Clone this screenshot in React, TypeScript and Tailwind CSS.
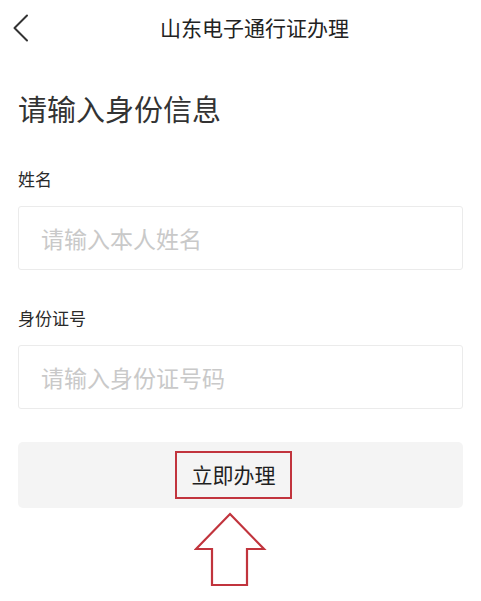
import React from "react";

const font = { fontFamily: '"Noto Sans CJK SC", "Noto Sans", sans-serif' };

function BackIcon() {
  return (
    <svg width="18" height="28" viewBox="0 0 18 28" fill="none">
      <path d="M15 1.5 L2.5 14 L15 26.5" stroke="#333" strokeWidth="2" strokeLinecap="round" strokeLinejoin="round" />
    </svg>
  );
}

function UpArrow() {
  return (
    <svg width="74" height="76" viewBox="0 0 74 76" fill="none">
      <path
        d="M36 2 L70 37 L53 37 L53 73 L18 73 L18 37 L2 37 Z"
        stroke="#c1343d"
        strokeWidth="2.2"
        strokeLinejoin="miter"
        fill="#fff"
      />
    </svg>
  );
}

function Field({ label, placeholder }: { label: string; placeholder: string }) {
  return (
    <div className="flex flex-col">
      <div className="text-[17px] leading-[24px] text-[#2a2a2a]">{label}</div>
      <input
        className="mt-[15px] h-[64px] w-full rounded-[3px] border border-[#ebebeb] bg-white px-[22px] text-[23px] text-[#333] outline-none placeholder:text-[#c9c9c9]"
        style={font}
        placeholder={placeholder}
      />
    </div>
  );
}

export default function App() {
  return (
    <div className="h-[601px] w-[481px] overflow-hidden bg-white" style={font}>
      <div className="grid h-[54px] grid-cols-[48px_1fr_20px] items-center">
        <div className="flex pl-[12px] pt-[2px]">
          <BackIcon />
        </div>
        <div className="text-center text-[21px] leading-[28px] text-[#222]">山东电子通行证办理</div>
        <div />
      </div>

      <div className="px-[18px]">
        <div className="mt-[35px] text-[29px] leading-[38px] text-[#333]">请输入身份信息</div>

        <div className="mt-[40px] flex flex-col gap-[36px]">
          <Field label="姓名" placeholder="请输入本人姓名" />
          <Field label="身份证号" placeholder="请输入身份证号码" />
        </div>

        <div className="mt-[33px] flex h-[66px] items-center justify-center rounded-[5px] bg-[#f4f4f4] pr-[14px]">
          <div className="flex h-[48px] w-[117px] items-center justify-center border-2 border-[#c1343d] text-[21px] text-[#1f1f1f]">
            立即办理
          </div>
        </div>

        <div className="mt-[4px] flex justify-center pr-[19px]">
          <UpArrow />
        </div>
      </div>
    </div>
  );
}
